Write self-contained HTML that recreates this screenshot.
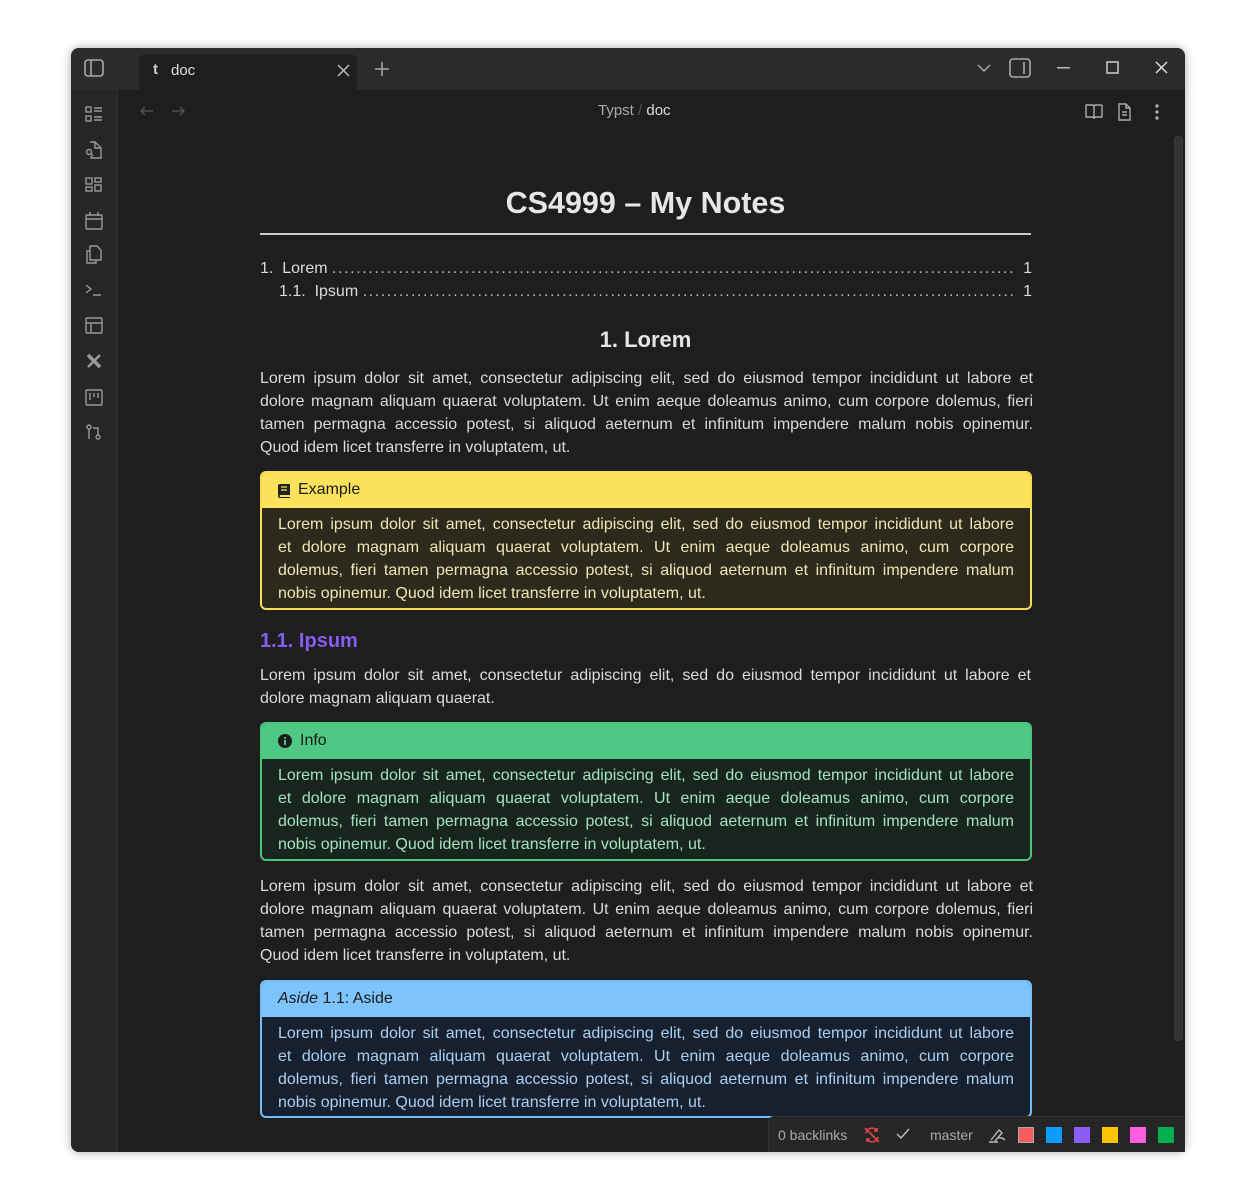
<!DOCTYPE html>
<html><head><meta charset="utf-8"><style>
*{box-sizing:border-box;margin:0;padding:0}
body{width:1257px;height:1200px;background:#fff;position:relative;overflow:hidden;font-family:"Liberation Sans",sans-serif}
.win{position:absolute;left:71px;top:48px;width:1114px;height:1104px;background:#1e1e1e;border-radius:8px;overflow:hidden;box-shadow:0 0 10px rgba(0,0,0,.35)}
.tb{position:absolute;left:0;top:0;width:100%;height:42px;background:#2b2b2b}
.tab{position:absolute;left:68px;top:6px;width:218px;height:36px;background:#1e1e1e;border-radius:7px 7px 0 0;color:#ddd;font-size:15px}
.side{position:absolute;left:0;top:42px;width:47px;bottom:0;background:#262626;border-right:1px solid #333}
.a{position:absolute;color:#dadada;font-size:16px;line-height:23px}
.j{display:block;text-align:justify;text-align-last:justify}
.n{display:block}
.box{position:absolute;left:260px;width:772px;border:2px solid;border-radius:6px;overflow:hidden}
.hd{height:35px;line-height:34px;padding-left:16px;font-size:16px;color:#1a1a1a}
.bd{padding:5px 16px 0 16px;font-size:16px;line-height:23px}
svg{position:absolute}
</style></head><body>
<div class="win">
 <div class="tb">
  <svg style="left:13px;top:11px" width="20" height="18" viewBox="0 0 20 18" fill="none" stroke="#aaa" stroke-width="1.6"><rect x="1" y="1" width="18" height="16" rx="3"/><line x1="7" y1="1" x2="7" y2="17"/></svg>
  <div class="tab"><span style="position:absolute;left:14px;top:7px;font-weight:bold;color:#ccc">t</span><span style="position:absolute;left:32px;top:8px">doc</span>
   <svg style="left:198px;top:10px" width="13" height="13" viewBox="0 0 13 13" stroke="#bbb" stroke-width="1.5"><path d="M1 1L12 12M12 1L1 12"/></svg></div>
  <svg style="left:304px;top:14px" width="14" height="14" viewBox="0 0 14 14" stroke="#aaa" stroke-width="1.5"><path d="M7 0V14M0 7H14"/></svg>
  <svg style="left:906px;top:16px" width="14" height="9" viewBox="0 0 14 9" fill="none" stroke="#aaa" stroke-width="1.5"><path d="M1 1L7 7L13 1"/></svg>
  <svg style="left:938px;top:10px" width="22" height="20" viewBox="0 0 22 20" fill="none" stroke="#aaa" stroke-width="1.6"><rect x="1" y="1" width="20" height="18" rx="3"/><line x1="15" y1="4" x2="15" y2="16"/></svg>
  <svg style="left:986px;top:19px" width="13" height="2"><rect width="13" height="1.5" fill="#bbb"/></svg>
  <svg style="left:1035px;top:13px" width="13" height="13" fill="none" stroke="#ccc" stroke-width="1.5"><rect x="1" y="1" width="11" height="11"/></svg>
  <svg style="left:1084px;top:13px" width="13" height="13" viewBox="0 0 13 13" stroke="#ddd" stroke-width="1.5"><path d="M1 1L12 12M12 1L1 12"/></svg>
 </div>
 <div class="side">
  <svg style="left:14px;top:16px" width="18" height="340" viewBox="0 0 18 340" fill="none" stroke="#999" stroke-width="1.4">
   <rect x="1" y="1" width="5" height="5"/><rect x="1" y="10" width="5" height="5"/><path d="M9 2H17M9 5H17M9 11H17M9 14H17"/>
   <path d="M6 37V36H10L16 42V52H6V50M10 36V42H16"/><circle cx="4" cy="46" r="2.5"/><path d="M6 48L8 50"/>
   <rect x="1" y="72" width="6" height="6"/><rect x="10" y="72" width="6" height="4"/><rect x="1" y="81" width="6" height="4"/><rect x="10" y="79" width="6" height="6"/>
   <rect x="1" y="109" width="16" height="14" rx="1"/><path d="M1 113H17M5 106V110M13 106V110"/>
   <path d="M5 142V140H12L16 144V154H5Z" /><path d="M5 145H2V157H11V154"/>
   <path d="M1 179L6 183L1 187M8 189H16"/>
   <rect x="1" y="212" width="16" height="15" rx="1"/><path d="M1 217H17M6 217V227"/>
   <path d="M3 249L15 261" stroke-width="3.5"/><path d="M15 249L3 261" stroke-width="2.5"/>
   <rect x="1" y="284" width="16" height="15" rx="1"/><path d="M5 287V294M9 287V291M13 287V292"/>
   <circle cx="4" cy="321" r="2"/><path d="M4 323V333"/><circle cx="13" cy="331" r="2"/><path d="M13 329V322H8"/>
  </svg>
 </div>
 <svg style="left:68px;top:57px" width="50" height="12" viewBox="0 0 50 12" fill="none" stroke="#555" stroke-width="1.3"><path d="M14 6H2M6 2L2 6L6 10M33 6H45M41 2L45 6L41 10"/></svg>
 <div style="position:absolute;left:527px;top:54px;font-size:15px;color:#aaa">Typst <span style="color:#555">/</span> <span style="color:#ddd">doc</span></div>
 <svg style="left:1014px;top:55px" width="80" height="18" viewBox="0 0 80 18" fill="none" stroke="#aaa" stroke-width="1.4"><path d="M1 2H7Q9 2 9 4V16Q9 14 7 14H1ZM17 2H11Q9 2 9 4M17 2V14H11Q9 14 9 16"/><path d="M34 1H41L45 5V17H34ZM41 1V5H45M37 9H42M37 12H42"/><circle cx="72" cy="3" r="1" fill="#aaa"/><circle cx="72" cy="9" r="1" fill="#aaa"/><circle cx="72" cy="15" r="1" fill="#aaa"/></svg>
 <div style="position:absolute;left:1103px;top:88px;width:9px;height:905px;background:#333;border-radius:4px;border:1px solid #3a3a3a"></div>
</div>

<div class="a" style="left:260px;top:185px;width:771px;text-align:center;font-size:30.5px;font-weight:bold;line-height:36px;color:#e6e6e6">CS4999 – My Notes</div>
<div style="position:absolute;left:260px;top:233px;width:771px;height:2px;background:#cfcfcf"></div>
<div class="a" style="left:260px;top:257px;width:771px;overflow:hidden;white-space:nowrap">1.&nbsp; Lorem <span style="letter-spacing:1.6px;color:#bbb">........................................................................................................................................................................</span></div>
<div class="a" style="left:1016px;top:257px;width:16px;text-align:right;background:#1e1e1e">&nbsp;1</div>
<div class="a" style="left:279px;top:280px;width:752px;overflow:hidden;white-space:nowrap">1.1.&nbsp; Ipsum <span style="letter-spacing:1.6px;color:#bbb">........................................................................................................................................................................</span></div>
<div class="a" style="left:1016px;top:280px;width:16px;text-align:right;background:#1e1e1e">&nbsp;1</div>

<div class="a" style="left:260px;top:325px;width:771px;text-align:center;font-size:22px;font-weight:bold;line-height:30px;color:#e6e6e6">1. Lorem</div>

<div class="a" style="left:260px;top:367px;width:773px">
<span class="j">Lorem ipsum dolor sit amet, consectetur adipiscing elit, sed do eiusmod tempor incididunt ut labore et</span>
<span class="j">dolore magnam aliquam quaerat voluptatem. Ut enim aeque doleamus animo, cum corpore dolemus, fieri</span>
<span class="j">tamen permagna accessio potest, si aliquod aeternum et infinitum impendere malum nobis opinemur.</span>
<span class="n">Quod idem licet transferre in voluptatem, ut.</span></div>

<div class="box" style="top:471px;height:139px;border-color:#f8de55;background:#2c2a1c">
 <div class="hd" style="background:#fde35c"><svg style="left:16px;top:11px" width="12" height="14" viewBox="0 0 12 14"><path d="M2 0H12V11H2.5A1 1 0 0 0 2.5 13H12V14H2Q0 14 0 12V2Q0 0 2 0Z" fill="#222"/><path d="M3 3H9M3 6H9" stroke="#fde35c" stroke-width="1.2"/></svg><span style="padding-left:20px">Example</span></div>
 <div class="bd" style="color:#f0e5b5"><span class="j">Lorem ipsum dolor sit amet, consectetur adipiscing elit, sed do eiusmod tempor incididunt ut labore</span><span class="j">et dolore magnam aliquam quaerat voluptatem. Ut enim aeque doleamus animo, cum corpore</span><span class="j">dolemus, fieri tamen permagna accessio potest, si aliquod aeternum et infinitum impendere malum</span><span class="n">nobis opinemur. Quod idem licet transferre in voluptatem, ut.</span></div>
</div>

<div class="a" style="left:260px;top:628px;font-size:20px;font-weight:bold;line-height:26px;color:#8a5cf5">1.1. Ipsum</div>
<div class="a" style="left:260px;top:664px;width:771px">
<span class="j">Lorem ipsum dolor sit amet, consectetur adipiscing elit, sed do eiusmod tempor incididunt ut labore et</span>
<span class="n">dolore magnam aliquam quaerat.</span></div>

<div class="box" style="top:722px;height:139px;border-color:#4bc47e;background:#18251f">
 <div class="hd" style="background:#4ec882"><svg style="left:16px;top:10px" width="14" height="14" viewBox="0 0 14 14"><circle cx="7" cy="7" r="7" fill="#1c1c1c"/><rect x="6" y="6" width="2" height="5" fill="#4ec882"/><circle cx="7" cy="4" r="1.1" fill="#4ec882"/></svg><span style="padding-left:22px">Info</span></div>
 <div class="bd" style="color:#a3e2bd"><span class="j">Lorem ipsum dolor sit amet, consectetur adipiscing elit, sed do eiusmod tempor incididunt ut labore</span><span class="j">et dolore magnam aliquam quaerat voluptatem. Ut enim aeque doleamus animo, cum corpore</span><span class="j">dolemus, fieri tamen permagna accessio potest, si aliquod aeternum et infinitum impendere malum</span><span class="n">nobis opinemur. Quod idem licet transferre in voluptatem, ut.</span></div>
</div>

<div class="a" style="left:260px;top:875px;width:773px">
<span class="j">Lorem ipsum dolor sit amet, consectetur adipiscing elit, sed do eiusmod tempor incididunt ut labore et</span>
<span class="j">dolore magnam aliquam quaerat voluptatem. Ut enim aeque doleamus animo, cum corpore dolemus, fieri</span>
<span class="j">tamen permagna accessio potest, si aliquod aeternum et infinitum impendere malum nobis opinemur.</span>
<span class="n">Quod idem licet transferre in voluptatem, ut.</span></div>

<div class="box" style="top:980px;height:138px;border-color:#74bef8;background:#17202e">
 <div class="hd" style="background:#7cc4fb"><i>Aside</i> 1.1: Aside</div>
 <div class="bd" style="color:#abcfef"><span class="j">Lorem ipsum dolor sit amet, consectetur adipiscing elit, sed do eiusmod tempor incididunt ut labore</span><span class="j">et dolore magnam aliquam quaerat voluptatem. Ut enim aeque doleamus animo, cum corpore</span><span class="j">dolemus, fieri tamen permagna accessio potest, si aliquod aeternum et infinitum impendere malum</span><span class="n">nobis opinemur. Quod idem licet transferre in voluptatem, ut.</span></div>
</div>

<div style="position:absolute;left:768px;top:1116px;width:417px;height:36px;background:#262626;border-top:1px solid #333;border-left:1px solid #333;border-radius:6px 0 0 0;font-size:14px;color:#aaa">
 <span style="position:absolute;left:9px;top:10px">0 backlinks</span>
 <svg style="left:94px;top:9px" width="18" height="18" viewBox="0 0 18 18" fill="none" stroke="#e04848" stroke-width="1.6"><path d="M3 7A6 6 0 0 1 14 5M15 11A6 6 0 0 1 4 13M14 2V5H11M4 16V13H7M2 2L16 16"/></svg>
 <svg style="left:127px;top:11px" width="14" height="11" viewBox="0 0 14 11" fill="none" stroke="#bbb" stroke-width="1.5"><path d="M1 6L5 10L13 1"/></svg>
 <span style="position:absolute;left:161px;top:10px">master</span>
 <svg style="left:219px;top:10px" width="18" height="16" viewBox="0 0 18 16" fill="none" stroke="#bbb" stroke-width="1.4"><path d="M1 15H10M3 13L11 3L14 6L7 14M9 11Q14 10 17 13"/></svg>
 <div style="position:absolute;left:249px;top:10px;width:16px;height:16px;background:#f75c5c;border:1px solid #aaa"></div>
 <div style="position:absolute;left:277px;top:10px;width:16px;height:16px;background:#0a9dff"></div>
 <div style="position:absolute;left:305px;top:10px;width:16px;height:16px;background:#8b5cf6"></div>
 <div style="position:absolute;left:333px;top:10px;width:16px;height:16px;background:#fdc300"></div>
 <div style="position:absolute;left:361px;top:10px;width:16px;height:16px;background:#ff5ee0"></div>
 <div style="position:absolute;left:389px;top:10px;width:16px;height:16px;background:#00b050"></div>
</div>
</body></html>
